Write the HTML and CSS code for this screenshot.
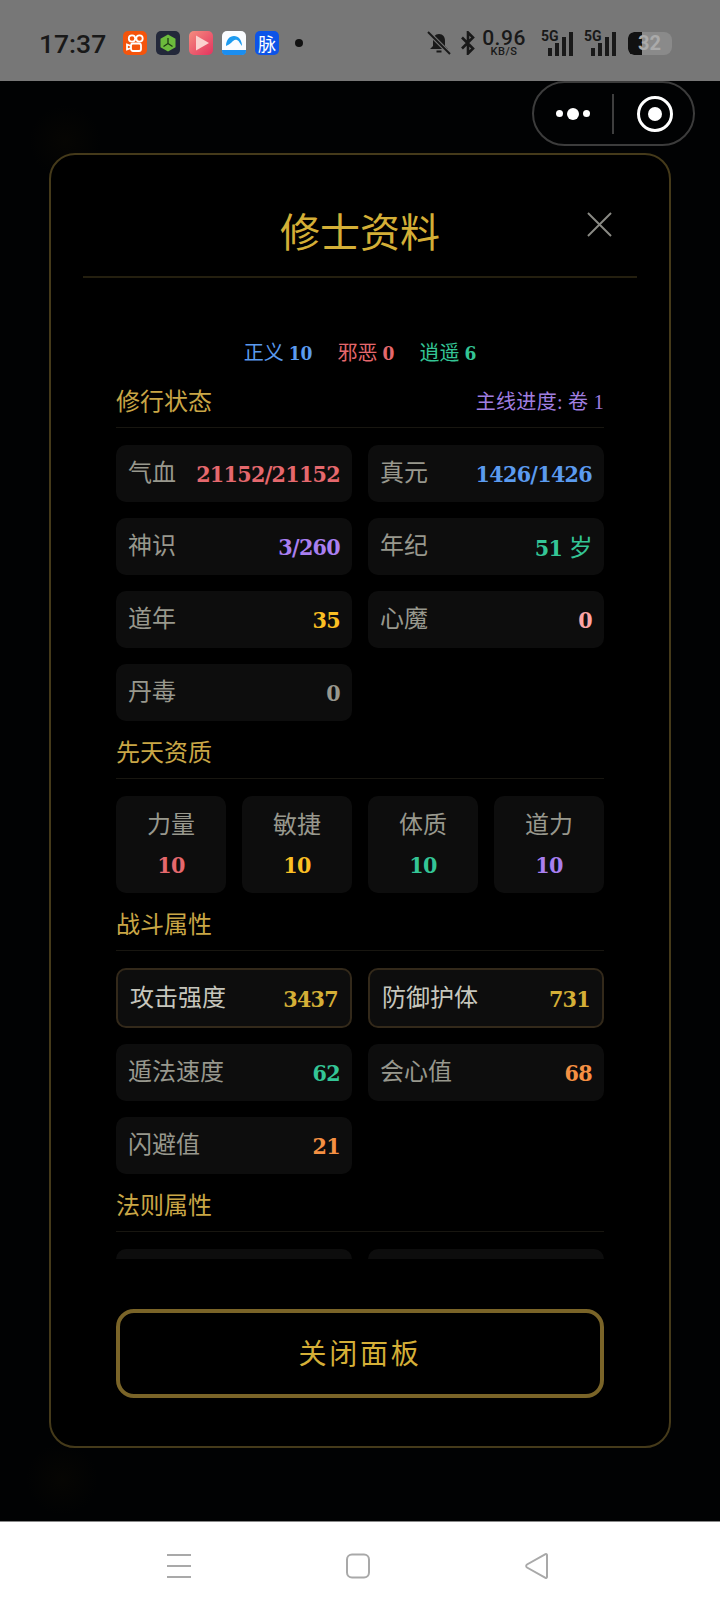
FILE: index.html
```html
<!DOCTYPE html>
<html lang="zh">
<head>
    <meta charset="UTF-8">
    <meta name="viewport" content="width=device-width, initial-scale=1.0">
    <title>修士资料</title>
    <link rel="stylesheet" href="styles.css">
</head>
<body>
    <!-- phone status bar -->
    <div class="status-bar">
        <span class="clock">17:37</span>
        <div class="app-icons">
            <svg class="app-icon" viewBox="0 0 24 24"><rect width="24" height="24" rx="5" fill="#f4540c"/><circle cx="9" cy="7.5" r="3.2" fill="none" stroke="#fff" stroke-width="1.8"/><circle cx="16.5" cy="7.5" r="3.2" fill="none" stroke="#fff" stroke-width="1.8"/><rect x="8" y="12.5" width="10" height="7.5" rx="2" fill="none" stroke="#fff" stroke-width="1.8"/><path d="M8 15l-4-1.500v5L8 17" fill="none" stroke="#fff" stroke-width="1.800"/></svg>
            <svg class="app-icon" viewBox="0 0 24 24"><rect width="24" height="24" rx="5" fill="#23283a"/><path d="M12 3.500l7.500 4.300v8.400L12 20.500l-7.500-4.300V7.800z" fill="#6cbb3c"/><path d="M12 7v5.500M12 12.500l-4.500 3M12 12.500l4.500 3" fill="none" stroke="#1f3a16" stroke-width="1.300"/></svg>
            <svg class="app-icon" viewBox="0 0 24 24"><defs><linearGradient id="playBg" x1="0" y1="0" x2="1" y2="1"><stop offset="0" stop-color="#f58d7f"/><stop offset="1" stop-color="#e4335f"/></linearGradient></defs><rect width="24" height="24" rx="5" fill="url(#playBg)"/><path d="M7 4.500v15L20 12z" fill="#fbd3cf"/></svg>
            <svg class="app-icon" viewBox="0 0 24 24"><rect width="24" height="24" rx="5" fill="#fafcff"/><path d="M0 19h24v1a4 4 0 0 1-4 4H4a4 4 0 0 1-4-4z" fill="#1b8ef0"/><path d="M4 15c0-6 3.500-10 8-10s8 4 8 10c-2-2-2.500-5-5-6-2.500-1-4 1-5.500 2.500C8 13 6 14 4 15z" fill="#1d9bf0"/></svg>
            <span class="app-icon app-mai">脉</span>
        </div>
        <span class="notify-dot"></span>

        <div class="sys-icons">
            <svg class="bell" viewBox="0 0 24 24"><path d="M12 3c-4 0-6 3-6 7v5l-3 3h18l-3-3v-5c0-4-2-7-6-7z" fill="#191919"/><path d="M9.500 20.500h5" stroke="#191919" stroke-width="2"/><path d="M1.500 1.500l21 21" stroke="#777" stroke-width="4"/><path d="M1 1l22 22" stroke="#191919" stroke-width="2"/></svg>
            <svg class="bluetooth" viewBox="0 0 16 24"><path d="M2 6.500l11 11L8 22.500V1.500l5 5-11 11" fill="none" stroke="#191919" stroke-width="2.600"/></svg>
            <div class="net-speed">
                <span class="net-num">0.96</span>
                <span class="net-unit">KB/S</span>
            </div>
            <div class="signal signal-first">
                <span class="signal-label">5G</span>
                <span class="bar bar1"></span><span class="bar bar2"></span><span class="bar bar3"></span><span class="bar bar4"></span>
            </div>
            <div class="signal">
                <span class="signal-label">5G</span>
                <span class="bar bar1"></span><span class="bar bar2"></span><span class="bar bar3"></span><span class="bar bar4"></span>
            </div>
            <div class="battery">
                <span class="battery-fill"></span>
                <span class="battery-num">32</span>
            </div>
        </div>
    </div>

    <div class="game-area">
        <!-- mini program capsule -->
        <div class="capsule">
            <div class="capsule-dots"><i></i><b></b><i></i></div>
            <span class="capsule-split"></span>
            <div class="capsule-target"><span></span></div>
        </div>

        <div class="panel">
            <div class="panel-head">
                <span></span>
                <h1 class="panel-title">修士资料</h1>
                <svg class="close-x" viewBox="0 0 26 26"><path d="M1 1l24 24M25 1L1 25" stroke="#8a8a84" stroke-width="2"/></svg>
            </div>

            <div class="panel-scroll">
                <div class="faction-row">
                    <span class="c-blue">正义 <b>10</b></span>
                    <span class="c-red">邪恶 <b>0</b></span>
                    <span class="c-green">逍遥 <b>6</b></span>
                </div>

                <div class="section-head">
                    <span>修行状态</span>
                    <span class="section-note">主线进度: 卷 1</span>
                </div>
                <div class="grid-two">
                    <div class="stat"><span class="stat-label">气血</span><span class="stat-value c-red">21152/21152</span></div>
                    <div class="stat"><span class="stat-label">真元</span><span class="stat-value c-blue">1426/1426</span></div>
                    <div class="stat"><span class="stat-label">神识</span><span class="stat-value c-purple">3/260</span></div>
                    <div class="stat"><span class="stat-label">年纪</span><span class="stat-value c-green">51 <em>岁</em></span></div>
                    <div class="stat"><span class="stat-label">道年</span><span class="stat-value c-yellow">35</span></div>
                    <div class="stat"><span class="stat-label">心魔</span><span class="stat-value c-pink">0</span></div>
                    <div class="stat"><span class="stat-label">丹毒</span><span class="stat-value c-gray">0</span></div>
                </div>

                <div class="section-head"><span>先天资质</span></div>
                <div class="grid-four">
                    <div class="attr"><span class="stat-label">力量</span><span class="stat-value c-red">10</span></div>
                    <div class="attr"><span class="stat-label">敏捷</span><span class="stat-value c-yellow">10</span></div>
                    <div class="attr"><span class="stat-label">体质</span><span class="stat-value c-green">10</span></div>
                    <div class="attr"><span class="stat-label">道力</span><span class="stat-value c-purple">10</span></div>
                </div>

                <div class="section-head"><span>战斗属性</span></div>
                <div class="grid-two">
                    <div class="stat stat-main"><span class="stat-label">攻击强度</span><span class="stat-value c-gold">3437</span></div>
                    <div class="stat stat-main"><span class="stat-label">防御护体</span><span class="stat-value c-gold">731</span></div>
                    <div class="stat"><span class="stat-label">遁法速度</span><span class="stat-value c-green">62</span></div>
                    <div class="stat"><span class="stat-label">会心值</span><span class="stat-value c-orange">68</span></div>
                    <div class="stat"><span class="stat-label">闪避值</span><span class="stat-value c-orange">21</span></div>
                </div>

                <div class="section-head"><span>法则属性</span></div>
                <div class="grid-two">
                    <div class="stat"></div>
                    <div class="stat"></div>
                </div>
            </div>

            <button class="close-btn">关闭面板</button>
        </div>
    </div>

    <!-- android nav bar -->
    <div class="nav-bar">
        <svg class="nav-icon" viewBox="0 0 26 26"><path d="M1 2h24M1 13h24M1 24h24" stroke="#a9a9a9" stroke-width="2"/></svg>
        <svg class="nav-icon" viewBox="0 0 26 26"><rect x="2" y="1.500" width="22" height="23" rx="5" fill="none" stroke="#a9a9a9" stroke-width="2"/></svg>
        <svg class="nav-icon" viewBox="0 0 26 26"><path d="M23 2v22a1 1 0 0 1-1.500.8L3 14.500a1.800 1.800 0 0 1 0-3L21.500 1.200A1 1 0 0 1 23 2z" fill="none" stroke="#a9a9a9" stroke-width="2"/></svg>
    </div>
</body>
</html>
```

FILE: styles.css
```css
* {
    box-sizing: border-box;
}

body {
    margin: 0;
    width: 720px;
    height: 1610px;
    overflow: hidden;
    display: flex;
    flex-direction: column;
    background: #000;
    font-family: "Liberation Serif", "Noto Sans CJK SC", serif;
}

/* status bar */
.status-bar {
    height: 81px;
    flex: none;
    display: flex;
    align-items: center;
    padding: 5px 48px 0 39px;
    background: #777;
    color: #191919;
    font-family: Roboto, "Noto Sans", sans-serif;
}

.clock {
    width: 84px;
    font-size: 26.500px;
    font-weight: 500;
}

.app-icons {
    display: flex;
    gap: 9px;
}

.app-icon {
    width: 24px;
    height: 24px;
    display: block;
}

.app-mai {
    border-radius: 5px;
    background: #0d54e8;
    color: #fff;
    font: 18px/24px "Noto Sans CJK SC", sans-serif;
    text-align: center;
}

.notify-dot {
    width: 8px;
    height: 8px;
    margin-left: 16px;
    border-radius: 50%;
    background: #111;
}

.sys-icons {
    margin-left: auto;
    display: flex;
    align-items: center;
}

.bell {
    width: 24px;
    height: 24px;
}

.bluetooth {
    width: 16px;
    height: 24px;
    margin-left: 9px;
}

.net-speed {
    width: 42px;
    margin-left: 7px;
    display: flex;
    flex-direction: column;
    align-items: center;
}

.net-num {
    font-size: 21px;
    font-weight: 500;
    line-height: 16px;
    letter-spacing: 0.500px;
}

.net-unit {
    font-size: 11px;
    font-weight: 500;
    line-height: 11px;
    letter-spacing: 0.500px;
}

.signal {
    position: relative;
    width: 32px;
    height: 25px;
    margin-left: 11px;
    display: flex;
    justify-content: flex-end;
    align-items: flex-end;
    gap: 3px;
}

.signal-first {
    margin-left: 16px;
}

.signal-label {
    position: absolute;
    left: 0;
    top: -1px;
    font-size: 14px;
    font-weight: 700;
    line-height: 13px;
}

.bar {
    width: 4px;
    background: #191919;
}

.bar1 { height: 8px; }
.bar2 { height: 13px; }
.bar3 { height: 19px; }
.bar4 { height: 24px; }

.battery {
    position: relative;
    width: 44px;
    height: 23px;
    margin-left: 12px;
    border-radius: 6px 8px 8px 6px;
    background: #8a8a8a;
    overflow: hidden;
}

.battery-fill {
    display: block;
    width: 14px;
    height: 23px;
    background: #111;
    border-radius: 6px 0 0 6px;
}

.battery-num {
    position: absolute;
    left: 10px;
    top: 0;
    color: #aaa;
    font-size: 20px;
    font-weight: 700;
    line-height: 23px;
}

/* game page */
.game-area {
    position: relative;
    flex: 1;
    min-height: 0;
    display: flex;
    flex-direction: column;
    padding: 72px 49px 73px;
    background:
        radial-gradient(circle at 62px 1398px, rgba(70, 50, 0, 0.07), transparent 36px),
        radial-gradient(circle at 65px 60px, rgba(70, 50, 0, 0.07), transparent 36px),
        #010203;
}

.capsule {
    position: absolute;
    left: 532px;
    top: 0;
    width: 163px;
    height: 65px;
    display: flex;
    align-items: center;
    border: 2px solid #3c3c3c;
    border-radius: 33px;
}

.capsule-dots {
    width: 78px;
    display: flex;
    justify-content: center;
    align-items: center;
    gap: 4px;
}

.capsule-dots i {
    width: 7px;
    height: 7px;
    border-radius: 50%;
    background: #fff;
}

.capsule-dots b {
    width: 12px;
    height: 12px;
    border-radius: 50%;
    background: #fff;
}

.capsule-split {
    width: 2px;
    height: 40px;
    background: #3e3e3e;
}

.capsule-target {
    width: 36px;
    height: 36px;
    margin-left: 23px;
    display: flex;
    justify-content: center;
    align-items: center;
    border: 3px solid #fff;
    border-radius: 50%;
}

.capsule-target span {
    width: 14px;
    height: 14px;
    border-radius: 50%;
    background: #fff;
}

.panel {
    flex: 1;
    min-height: 0;
    display: flex;
    flex-direction: column;
    background: #000;
    border: 2px solid #453a1a;
    border-radius: 26px;
}

.panel-head {
    height: 123px;
    flex: none;
    margin: 0 32px;
    display: grid;
    grid-template-columns: 1fr auto 1fr;
    border-bottom: 2px solid #241f0f;
}

.panel-title {
    margin: 47px 0 0;
    color: #d4af37;
    font: 400 40px/56px "Noto Sans CJK SC", sans-serif;
}

.close-x {
    justify-self: end;
    width: 25px;
    height: 25px;
    margin: 57px 25px 0 0;
}

.panel-scroll {
    flex: 1;
    min-height: 0;
    overflow: hidden;
    padding: 0 65px;
}

.faction-row {
    height: 31px;
    margin-top: 61px;
    display: flex;
    justify-content: center;
    gap: 25px;
    font-size: 20px;
    line-height: 28px;
}

.faction-row b {
    font-family: "DejaVu Serif Condensed", "DejaVu Serif", serif;
    font-size: 19px;
}

.section-head {
    display: flex;
    justify-content: space-between;
    margin-top: 16px;
    padding-bottom: 9px;
    border-bottom: 1px solid #181610;
    color: #c9a646;
    font-size: 24px;
    line-height: 32px;
}

.section-note {
    color: #a07fe0;
    font-size: 20px;
    letter-spacing: 0.300px;
}

.grid-two {
    display: grid;
    grid-template-columns: 1fr 1fr;
    gap: 16px;
    margin-top: 17px;
}

.grid-four {
    display: grid;
    grid-template-columns: repeat(4, 1fr);
    gap: 16px;
    margin-top: 17px;
}

.stat {
    height: 57px;
    display: flex;
    justify-content: space-between;
    align-items: center;
    padding: 0 12px;
    background: #0d0d0d;
    border-radius: 10px;
}

.stat-label {
    color: #98988d;
    font-size: 24px;
    line-height: 33px;
}

.stat-value {
    font-family: "DejaVu Serif Condensed", "DejaVu Serif", serif;
    font-size: 23px;
    font-weight: 700;
    line-height: 33px;
    letter-spacing: -0.700px;
}

.stat-value em {
    font-family: "Noto Sans CJK SC", sans-serif;
    font-size: 24px;
    font-style: normal;
    font-weight: 400;
}

.stat-main {
    height: 60px;
    padding: 0 12px;
    border: 2px solid #33291a;
}

.stat-main .stat-label {
    color: #c6c6bd;
}

.attr {
    height: 97px;
    display: flex;
    flex-direction: column;
    align-items: center;
    padding-top: 13px;
    gap: 6px;
    background: #0d0d0d;
    border-radius: 10px;
}

.close-btn {
    height: 89px;
    flex: none;
    margin: 50px 65px 48px;
    padding-bottom: 4px;
    background: #000;
    border: 4px solid #7a6428;
    border-radius: 18px;
    color: #d4af37;
    font: 28px "Noto Sans CJK SC", sans-serif;
    letter-spacing: 2.800px;
}

.c-red { color: #e5686d; }
.c-blue { color: #5b9bef; }
.c-green { color: #34c596; }
.c-purple { color: #a97ff0; }
.c-yellow { color: #fbbf24; }
.c-pink { color: #fca5a5; }
.c-gray { color: #98988d; }
.c-gold { color: #d4af37; }
.c-orange { color: #f59043; }

/* nav bar */
.nav-bar {
    height: 89px;
    flex: none;
    display: flex;
    align-items: center;
    gap: 153px;
    padding-left: 166px;
    background: #fff;
    border-top: 1px solid #888;
}

.nav-icon {
    width: 26px;
    height: 26px;
}
```
